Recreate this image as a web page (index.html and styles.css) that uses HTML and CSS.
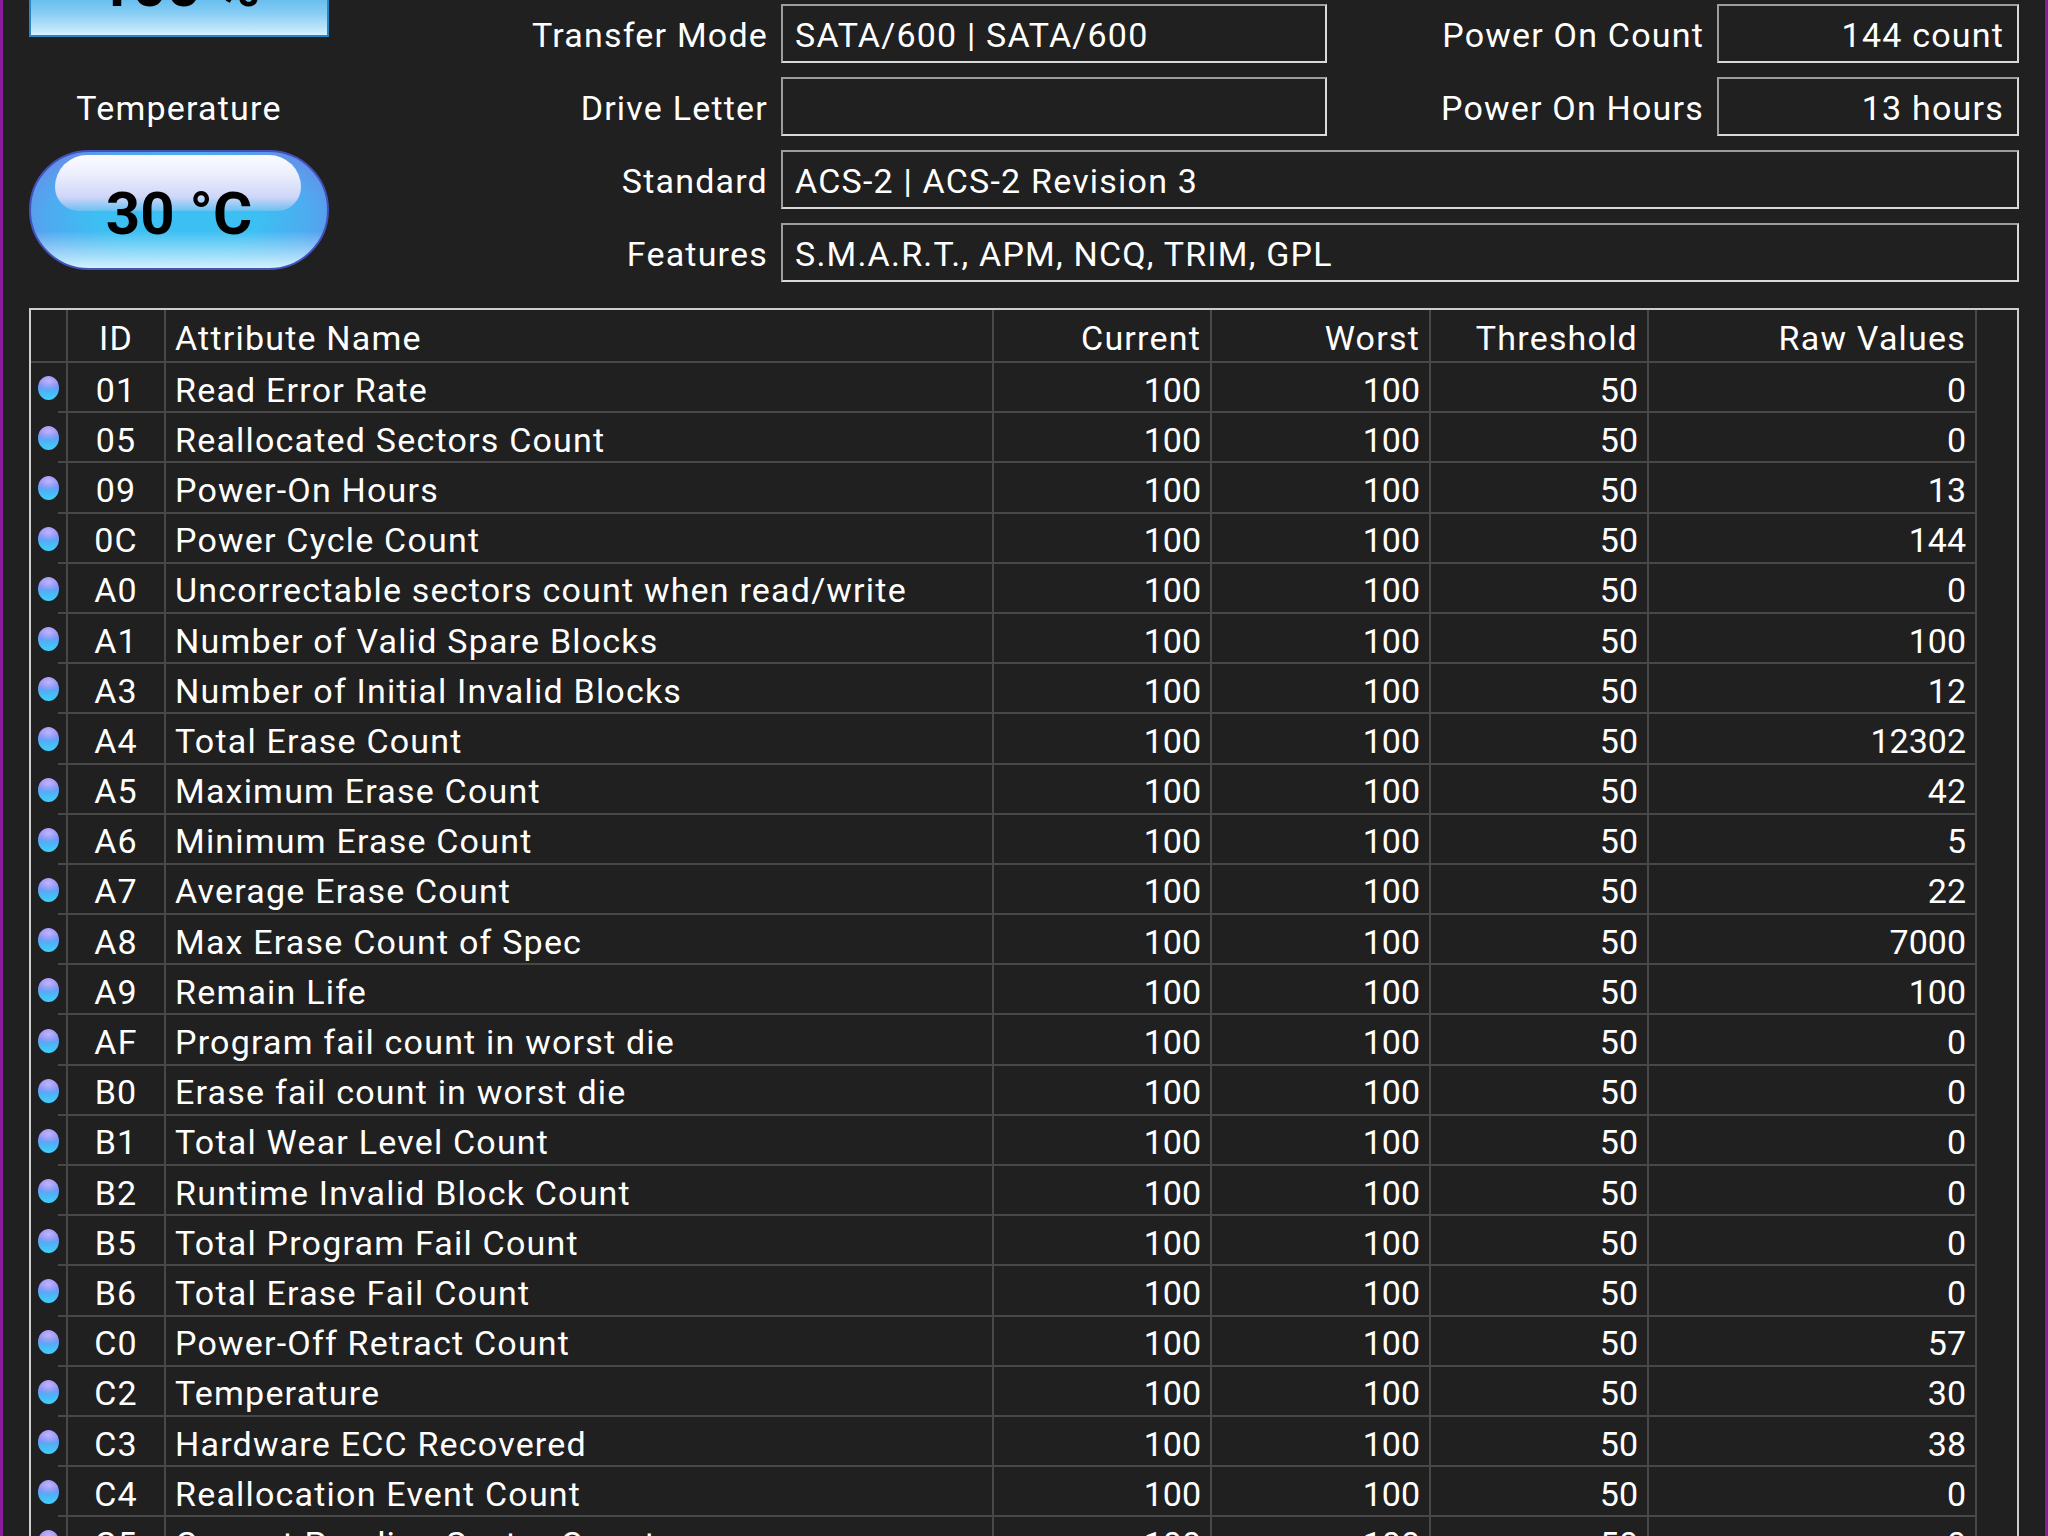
FILE: index.html
```html
<!DOCTYPE html>
<html lang="en">
<head>
  <meta charset="UTF-8" />
  <title>CrystalDiskInfo</title>
  <link rel="stylesheet" href="styles.css">
</head>
<body>
  <div class="window">
    <div class="top">
      <div class="status">
        <div class="health">100 %</div>
        <div class="temp-label">Temperature</div>
        <div class="temp"><span>30 °C</span></div>
      </div>
      <div class="info">
        <div class="label">Transfer Mode</div>
        <div class="field">SATA/600 | SATA/600</div>
        <div class="label">Power On Count</div>
        <div class="field right">144 count</div>
        <div class="label">Drive Letter</div>
        <div class="field"></div>
        <div class="label">Power On Hours</div>
        <div class="field right">13 hours</div>
        <div class="label">Standard</div>
        <div class="field wide">ACS-2 | ACS-2 Revision 3</div>
        <div class="label">Features</div>
        <div class="field wide">S.M.A.R.T., APM, NCQ, TRIM, GPL</div>
      </div>
    </div>

    <div class="smart">
      <div class="row head">
        <div class="cell"></div>
        <div class="cell id">ID</div>
        <div class="cell name">Attribute Name</div>
        <div class="cell num">Current</div>
        <div class="cell num">Worst</div>
        <div class="cell num">Threshold</div>
        <div class="cell num">Raw Values</div>
      </div>
      <div class="row"><div class="cell dot-cell"><i class="dot"></i></div><div class="cell id">01</div><div class="cell name">Read Error Rate</div><div class="cell num">100</div><div class="cell num">100</div><div class="cell num">50</div><div class="cell num">0</div></div>
      <div class="row"><div class="cell dot-cell"><i class="dot"></i></div><div class="cell id">05</div><div class="cell name">Reallocated Sectors Count</div><div class="cell num">100</div><div class="cell num">100</div><div class="cell num">50</div><div class="cell num">0</div></div>
      <div class="row"><div class="cell dot-cell"><i class="dot"></i></div><div class="cell id">09</div><div class="cell name">Power-On Hours</div><div class="cell num">100</div><div class="cell num">100</div><div class="cell num">50</div><div class="cell num">13</div></div>
      <div class="row"><div class="cell dot-cell"><i class="dot"></i></div><div class="cell id">0C</div><div class="cell name">Power Cycle Count</div><div class="cell num">100</div><div class="cell num">100</div><div class="cell num">50</div><div class="cell num">144</div></div>
      <div class="row"><div class="cell dot-cell"><i class="dot"></i></div><div class="cell id">A0</div><div class="cell name">Uncorrectable sectors count when read/write</div><div class="cell num">100</div><div class="cell num">100</div><div class="cell num">50</div><div class="cell num">0</div></div>
      <div class="row"><div class="cell dot-cell"><i class="dot"></i></div><div class="cell id">A1</div><div class="cell name">Number of Valid Spare Blocks</div><div class="cell num">100</div><div class="cell num">100</div><div class="cell num">50</div><div class="cell num">100</div></div>
      <div class="row"><div class="cell dot-cell"><i class="dot"></i></div><div class="cell id">A3</div><div class="cell name">Number of Initial Invalid Blocks</div><div class="cell num">100</div><div class="cell num">100</div><div class="cell num">50</div><div class="cell num">12</div></div>
      <div class="row"><div class="cell dot-cell"><i class="dot"></i></div><div class="cell id">A4</div><div class="cell name">Total Erase Count</div><div class="cell num">100</div><div class="cell num">100</div><div class="cell num">50</div><div class="cell num">12302</div></div>
      <div class="row"><div class="cell dot-cell"><i class="dot"></i></div><div class="cell id">A5</div><div class="cell name">Maximum Erase Count</div><div class="cell num">100</div><div class="cell num">100</div><div class="cell num">50</div><div class="cell num">42</div></div>
      <div class="row"><div class="cell dot-cell"><i class="dot"></i></div><div class="cell id">A6</div><div class="cell name">Minimum Erase Count</div><div class="cell num">100</div><div class="cell num">100</div><div class="cell num">50</div><div class="cell num">5</div></div>
      <div class="row"><div class="cell dot-cell"><i class="dot"></i></div><div class="cell id">A7</div><div class="cell name">Average Erase Count</div><div class="cell num">100</div><div class="cell num">100</div><div class="cell num">50</div><div class="cell num">22</div></div>
      <div class="row"><div class="cell dot-cell"><i class="dot"></i></div><div class="cell id">A8</div><div class="cell name">Max Erase Count of Spec</div><div class="cell num">100</div><div class="cell num">100</div><div class="cell num">50</div><div class="cell num">7000</div></div>
      <div class="row"><div class="cell dot-cell"><i class="dot"></i></div><div class="cell id">A9</div><div class="cell name">Remain Life</div><div class="cell num">100</div><div class="cell num">100</div><div class="cell num">50</div><div class="cell num">100</div></div>
      <div class="row"><div class="cell dot-cell"><i class="dot"></i></div><div class="cell id">AF</div><div class="cell name">Program fail count in worst die</div><div class="cell num">100</div><div class="cell num">100</div><div class="cell num">50</div><div class="cell num">0</div></div>
      <div class="row"><div class="cell dot-cell"><i class="dot"></i></div><div class="cell id">B0</div><div class="cell name">Erase fail count in worst die</div><div class="cell num">100</div><div class="cell num">100</div><div class="cell num">50</div><div class="cell num">0</div></div>
      <div class="row"><div class="cell dot-cell"><i class="dot"></i></div><div class="cell id">B1</div><div class="cell name">Total Wear Level Count</div><div class="cell num">100</div><div class="cell num">100</div><div class="cell num">50</div><div class="cell num">0</div></div>
      <div class="row"><div class="cell dot-cell"><i class="dot"></i></div><div class="cell id">B2</div><div class="cell name">Runtime Invalid Block Count</div><div class="cell num">100</div><div class="cell num">100</div><div class="cell num">50</div><div class="cell num">0</div></div>
      <div class="row"><div class="cell dot-cell"><i class="dot"></i></div><div class="cell id">B5</div><div class="cell name">Total Program Fail Count</div><div class="cell num">100</div><div class="cell num">100</div><div class="cell num">50</div><div class="cell num">0</div></div>
      <div class="row"><div class="cell dot-cell"><i class="dot"></i></div><div class="cell id">B6</div><div class="cell name">Total Erase Fail Count</div><div class="cell num">100</div><div class="cell num">100</div><div class="cell num">50</div><div class="cell num">0</div></div>
      <div class="row"><div class="cell dot-cell"><i class="dot"></i></div><div class="cell id">C0</div><div class="cell name">Power-Off Retract Count</div><div class="cell num">100</div><div class="cell num">100</div><div class="cell num">50</div><div class="cell num">57</div></div>
      <div class="row"><div class="cell dot-cell"><i class="dot"></i></div><div class="cell id">C2</div><div class="cell name">Temperature</div><div class="cell num">100</div><div class="cell num">100</div><div class="cell num">50</div><div class="cell num">30</div></div>
      <div class="row"><div class="cell dot-cell"><i class="dot"></i></div><div class="cell id">C3</div><div class="cell name">Hardware ECC Recovered</div><div class="cell num">100</div><div class="cell num">100</div><div class="cell num">50</div><div class="cell num">38</div></div>
      <div class="row"><div class="cell dot-cell"><i class="dot"></i></div><div class="cell id">C4</div><div class="cell name">Reallocation Event Count</div><div class="cell num">100</div><div class="cell num">100</div><div class="cell num">50</div><div class="cell num">0</div></div>
      <div class="row"><div class="cell dot-cell"><i class="dot"></i></div><div class="cell id">C5</div><div class="cell name">Current Pending Sector Count</div><div class="cell num">100</div><div class="cell num">100</div><div class="cell num">50</div><div class="cell num">0</div></div>
    </div>
  </div>
</body>
</html>
```

FILE: styles.css
```css
body {
  margin: 0;
  background-color: #202020;
  font-family: Roboto, "Liberation Sans", sans-serif;
  color: #ffffff;
}
.window {
  height: 1536px;
  overflow: hidden;
  border-left: 3px solid #8a1d9f;
  border-right: 3px solid #8a1d9f;
  padding: 0 26px;
  background-color: #202020;
  font-size: 34px;
  letter-spacing: 1.2px;
}

/* top part: health, temperature and drive info */
.top {
  display: flex;
}
.status {
  width: 300px;
  display: flex;
  flex-direction: column;
}
.health {
  height: 104px;
  margin-top: -67px;
  box-sizing: border-box;
  border: 2px solid #2a84c8;
  background: linear-gradient(to bottom, #3aa6e6 0%, #48aeea 50%, #86ccf3 78%, #c6e9fb 96%, #d8f1fd 100%);
  color: #000;
  font-weight: bold;
  font-size: 60px;
  letter-spacing: 0;
  display: flex;
  align-items: center;
  justify-content: center;
}
.temp-label {
  margin-top: 51px;
  height: 40px;
  line-height: 40px;
  text-align: center;
}
.temp {
  position: relative;
  margin-top: 22px;
  height: 120px;
  box-sizing: border-box;
  padding-top: 6px;
  border-radius: 60px;
  border: 2px solid #4252bd;
  background:
    linear-gradient(to bottom, rgba(190, 235, 252, 0) 68%, rgba(190, 235, 252, 0.85) 92%, #d4f1fd 100%),
    radial-gradient(ellipse 62% 75% at 50% 55%, #3cbff2 45%, #4faaf0 72%, #6d86e8 100%);
  color: #000;
  font-weight: bold;
  font-size: 60px;
  letter-spacing: 0;
  display: flex;
  align-items: center;
  justify-content: center;
}
.temp::before {
  content: "";
  position: absolute;
  left: 24px;
  right: 26px;
  top: 3px;
  height: 56px;
  border-radius: 40px 40px 30px 30px;
  background: linear-gradient(to bottom, #fbfbff 0%, #eceefd 35%, #cfd6f8 75%, rgba(170, 200, 245, 0.4) 100%);
}
.temp span {
  position: relative;
}

.info {
  display: grid;
  grid-template-columns: 452px 546px 390px 302px;
  grid-auto-rows: 59px;
  row-gap: 14px;
  padding-top: 4px;
}
.label {
  display: flex;
  align-items: center;
  justify-content: flex-end;
  padding-right: 13px;
  padding-top: 2px;
}
.field {
  box-sizing: border-box;
  border: 2px solid;
  border-color: #9d9d9d #dadada #dadada #9d9d9d;
  padding: 2px 12px 0;
  display: flex;
  align-items: center;
  white-space: nowrap;
}
.field.right {
  justify-content: flex-end;
  padding-right: 13px;
}
.field.wide {
  grid-column: 2 / 5;
}

/* S.M.A.R.T. attribute list */
.smart {
  margin-top: 26px;
  border: 2px solid #cdcdcd;
  border-bottom: none;
}
.row {
  display: grid;
  grid-template-columns: 37px 98px 828px 218px 219px 218px 328px;
  height: 50.2px;
}
.row.head {
  height: 53px;
}
.cell {
  box-sizing: border-box;
  border-right: 2px solid #484848;
  border-bottom: 2px solid #484848;
  padding-top: 5px;
  display: flex;
  align-items: center;
  white-space: nowrap;
  overflow: hidden;
}
.dot-cell {
  border-bottom: none;
  padding-top: 0;
  justify-content: center;
  background: linear-gradient(#484848, #484848) no-repeat right bottom / 8px 2px;
}
.id {
  justify-content: center;
}
.name {
  padding-left: 9px;
}
.num {
  justify-content: flex-end;
  padding-right: 9px;
}
.row:not(.head) .num {
  letter-spacing: 0;
}
.dot {
  width: 21px;
  height: 24px;
  border-radius: 50%;
  background:
    radial-gradient(ellipse 60% 35% at 50% 22%, rgba(210, 200, 255, 0.7), rgba(210, 200, 255, 0) 100%),
    linear-gradient(to bottom, #a08af6 0%, #7f8cf4 35%, #4db4f6 65%, #3fd0fb 100%);
}
```
